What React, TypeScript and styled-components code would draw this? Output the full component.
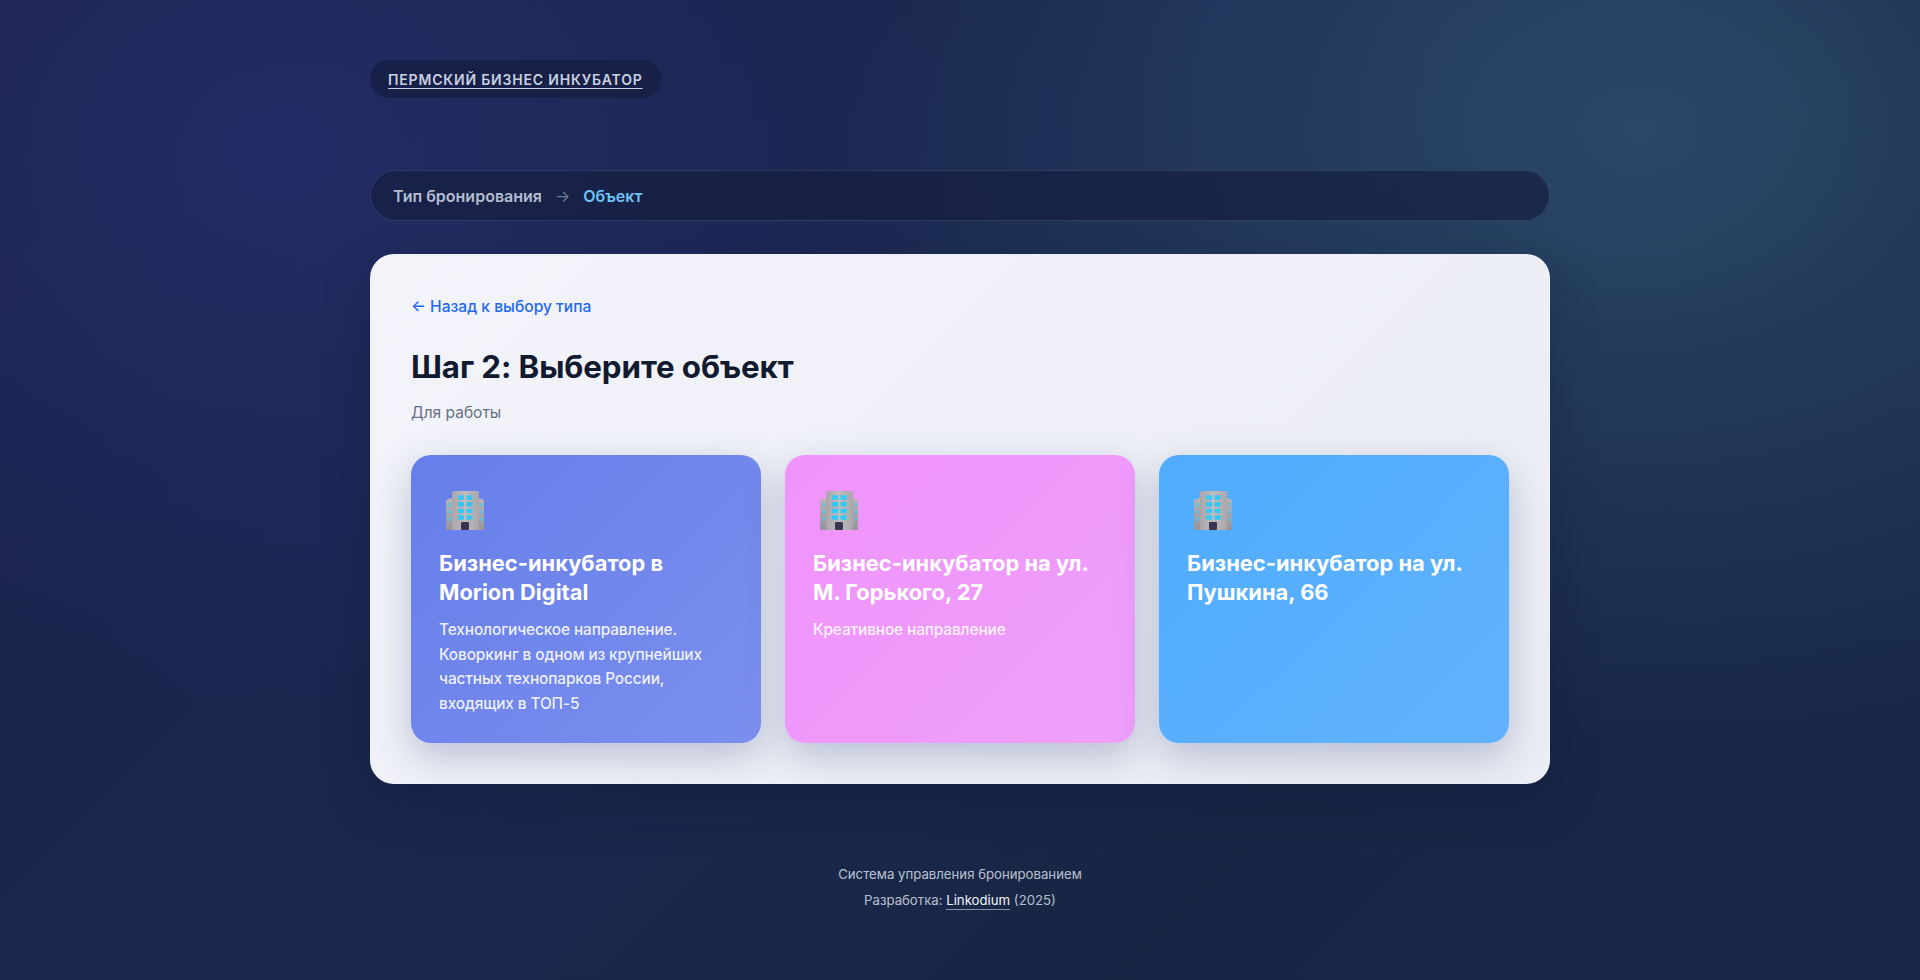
import React from "react";
import styled, { createGlobalStyle } from "styled-components";

const Global = createGlobalStyle`
  html, body { margin: 0; padding: 0; min-height: 100%; }
  body {
    font-family: Inter, "Noto Sans", "Liberation Sans", sans-serif;
    background-color: #16233f;
  }
`;

const Page = styled.div`
  box-sizing: border-box;
  width: 100%;
  height: 980px;
  overflow: hidden;
  padding-top: 60px;
  display: flex;
  flex-direction: column;
  align-items: center;
  background:
    radial-gradient(820px 620px at 1640px 130px, rgba(50, 86, 118, 0.7), rgba(50, 86, 118, 0) 100%),
    radial-gradient(680px 560px at 280px 150px, rgba(37, 47, 108, 0.8), rgba(37, 47, 108, 0) 100%),
    linear-gradient(135deg, #1a2148 0%, #1a2850 42%, #182644 72%, #192849 100%);
`;

const Shell = styled.div`
  width: 1180px;
  display: flex;
  flex-direction: column;
`;

const Brand = styled.a`
  align-self: flex-start;
  box-sizing: border-box;
  height: 38px;
  padding: 0 18px;
  display: inline-flex;
  align-items: center;
  border-radius: 19px;
  background: rgba(20, 28, 62, 0.7);
  color: #c8d0e2;
  font-size: 14px;
  font-weight: 600;
  letter-spacing: 0.82px;
  text-decoration: underline;
  text-underline-offset: 3px;
`;

const Steps = styled.nav`
  box-sizing: border-box;
  margin-top: 72px;
  height: 51px;
  padding: 0 22px;
  display: flex;
  align-items: center;
  gap: 13px;
  border-radius: 26px;
  border: 1px solid rgba(148, 170, 210, 0.18);
  background: rgba(21, 29, 62, 0.68);
  font-size: 16px;
  font-weight: 600;
`;

const Step = styled.span<{ $active?: boolean }>`
  color: ${(p) => (p.$active ? "#6cc4f6" : "#b4bccf")};
`;

const Arrow = styled.span`
  color: #6b7a98;
  font-size: 16px;
  font-weight: 400;
`;

const Panel = styled.main`
  box-sizing: border-box;
  margin-top: 33px;
  padding: 40px;
  border: 1px solid transparent;
  border-radius: 24px;
  background: linear-gradient(135deg, #f3f4fa 0%, #ebedf4 100%);
  box-shadow: 0 20px 50px rgba(8, 14, 36, 0.22);
`;

const Back = styled.a`
  display: block;
  color: #2469f0;
  font-size: 15.6px;
  font-weight: 500;
  line-height: 24px;
`;

const Title = styled.h1`
  margin: 26px 0 0;
  color: #111a2e;
  font-size: 31.3px;
  font-weight: 700;
  line-height: 44px;
  letter-spacing: -0.1px;
`;

const Sub = styled.p`
  margin: 12px 0 0;
  color: #667085;
  font-size: 15.5px;
  line-height: 24px;
`;

const Grid = styled.div`
  margin-top: 30px;
  display: grid;
  grid-template-columns: repeat(3, 1fr);
  gap: 24px;
`;

const Tile = styled.article<{ $from: string; $to: string }>`
  box-sizing: border-box;
  height: 288px;
  padding: 28px;
  border-radius: 20px;
  color: #fff;
  background: linear-gradient(135deg, ${(p) => p.$from}, ${(p) => p.$to});
  box-shadow: 0 14px 38px rgba(70, 90, 140, 0.32);
`;

const IconWrap = styled.div`
  height: 40px;
  margin-bottom: 18px;
  padding: 8px 0 0 7px;
`;

const TileTitle = styled.h2`
  margin: 0;
  font-size: 21.9px;
  font-weight: 700;
  line-height: 29px;
`;

const TileText = styled.p`
  margin: 11px 0 0;
  font-size: 15.4px;
  font-weight: 500;
  letter-spacing: -0.12px;
  line-height: 24.5px;
  color: rgba(255, 255, 255, 0.9);
`;

const Footer = styled.footer`
  margin-top: 77px;
  text-align: center;
  color: rgba(226, 232, 244, 0.8);
  font-size: 13.2px;
  line-height: 26px;
`;

const FooterLink = styled.a`
  color: #f2f5fb;
  border-bottom: 1px solid rgba(226, 232, 244, 0.55);
  padding-bottom: 1px;
`;

const Building = () => (
  <svg width="38" height="39" viewBox="0 0 38 39">
    <defs>
      <linearGradient id="bFront" x1="0" y1="0" x2="1" y2="0">
        <stop offset="0" stopColor="#a9a5aa" />
        <stop offset="0.5" stopColor="#c0bbbe" />
        <stop offset="1" stopColor="#aaa6ab" />
      </linearGradient>
      <linearGradient id="bBase" x1="0" y1="0" x2="0" y2="1">
        <stop offset="0" stopColor="#b8b3b7" />
        <stop offset="1" stopColor="#98949b" />
      </linearGradient>
    </defs>
    <path d="M0 9l6-2v32H0z" fill="url(#bBase)" />
    <path d="M33 7l5 2v30h-5z" fill="url(#bBase)" />
    <path d="M6 2Q6 0 8 0h23q2 0 2 2v37H6z" fill="url(#bFront)" />
    {[4.300, 11, 17.700, 24.300].map((y) => (
      <g key={y} fill="#32c8f8">
        <rect x="12" y={y} width="6" height="4.400" rx="0.4" />
        <rect x="20.500" y={y} width="6" height="4.400" rx="0.4" />
      </g>
    ))}
    {[12, 19, 26].map((y) => (
      <g key={y} fill="#5cc4e6">
        <rect x="2.500" y={y} width="2.500" height="4" />
        <rect x="34.500" y={y} width="2" height="4" />
      </g>
    ))}
    <rect x="15" y="31" width="8" height="8" rx="1" fill="#3a3550" />
  </svg>
);

const tiles = [
  {
    from: "#667eea",
    to: "#7b8fee",
    title: "Бизнес-инкубатор в Morion Digital",
    text: "Технологическое направление. Коворкинг в одном из крупнейших частных технопарков России, входящих в ТОП-5",
  },
  {
    from: "#f093fb",
    to: "#ee9ffb",
    title: "Бизнес-инкубатор на ул. М. Горького, 27",
    text: "Креативное направление",
  },
  {
    from: "#4facfe",
    to: "#62b2fe",
    title: "Бизнес-инкубатор на ул. Пушкина, 66",
    text: "",
  },
];

export default function App() {
  return (
    <>
      <Global />
      <Page>
        <Shell>
          <Brand>ПЕРМСКИЙ БИЗНЕС ИНКУБАТОР</Brand>
          <Steps>
            <Step>Тип бронирования</Step>
            <Arrow>→</Arrow>
            <Step $active>Объект</Step>
          </Steps>
          <Panel>
            <Back>← Назад к выбору типа</Back>
            <Title>Шаг 2: Выберите объект</Title>
            <Sub>Для работы</Sub>
            <Grid>
              {tiles.map((t) => (
                <Tile key={t.title} $from={t.from} $to={t.to}>
                  <IconWrap>
                    <Building />
                  </IconWrap>
                  <TileTitle>{t.title}</TileTitle>
                  {t.text && <TileText>{t.text}</TileText>}
                </Tile>
              ))}
            </Grid>
          </Panel>
          <Footer>
            <div>Система управления бронированием</div>
            <div>
              Разработка: <FooterLink>Linkodium</FooterLink> (2025)
            </div>
          </Footer>
        </Shell>
      </Page>
    </>
  );
}
